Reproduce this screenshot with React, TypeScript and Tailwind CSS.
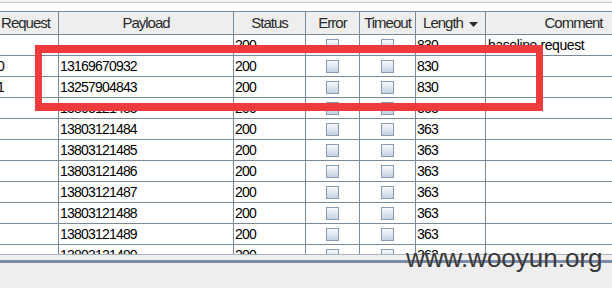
import React from "react";

type Row = { req: string; payload: string; status: string; length: string; comment: string };

const rows: Row[] = [
  { req: "", payload: "", status: "200", length: "830", comment: "baseline request" },
  { req: "0", payload: "13169670932", status: "200", length: "830", comment: "" },
  { req: "1", payload: "13257904843", status: "200", length: "830", comment: "" },
  { req: "", payload: "13803121483", status: "200", length: "363", comment: "" },
  { req: "", payload: "13803121484", status: "200", length: "363", comment: "" },
  { req: "", payload: "13803121485", status: "200", length: "363", comment: "" },
  { req: "", payload: "13803121486", status: "200", length: "363", comment: "" },
  { req: "", payload: "13803121487", status: "200", length: "363", comment: "" },
  { req: "", payload: "13803121488", status: "200", length: "363", comment: "" },
  { req: "", payload: "13803121489", status: "200", length: "363", comment: "" },
  { req: "", payload: "13803121490", status: "200", length: "363", comment: "" },
];

function Check() {
  return (
    <div className="w-[13px] h-[13px] border border-[#8b9bb0] bg-linear-to-b from-[#f7f9fc] to-[#c5d2e3]" />
  );
}

function HeaderCell({ w, children }: { w: string; children: React.ReactNode }) {
  return (
    <div className={`${w} shrink-0 h-full border-r border-[#7a8a99] flex items-center justify-center pt-[1px]`}>
      {children}
    </div>
  );
}

export default function App() {
  return (
    <div className="w-[612px] h-[288px] overflow-hidden relative bg-[#eeeeee] font-['Liberation_Sans',Arial,sans-serif]">
      <div className="h-[2px] bg-[#f5f5f5]" />
      <div className="h-px bg-[#c4c4c4]" />
      <div className="h-[8px] bg-white" />
      <div className="h-[244px] overflow-hidden bg-white border-b border-[#aab4c0]">
        <div className="-ml-[7px] w-[700px]">
          <div className="flex h-[24px] border-y border-[#7a8a99] bg-[#eeeeee] text-[15px] tracking-[-1px] text-[#2a2a2a]">
            <HeaderCell w="w-[66px]">Request</HeaderCell>
            <HeaderCell w="w-[175px]">Payload</HeaderCell>
            <HeaderCell w="w-[72px]">Status</HeaderCell>
            <HeaderCell w="w-[54px]">Error</HeaderCell>
            <HeaderCell w="w-[56px]">Timeout</HeaderCell>
            <HeaderCell w="w-[70px]">
              <span>Length</span>
              <svg width="9" height="5" viewBox="0 0 9 5" className="ml-[6px] mt-[1px]">
                <path d="M0 0 H9 L4.5 5 Z" fill="#2a2a2a" />
              </svg>
            </HeaderCell>
            <HeaderCell w="w-[176px]">Comment</HeaderCell>
          </div>
          {rows.map((r, i) => (
            <div key={i} className="flex h-[21px] border-b border-[#7a8a99] text-[14px] tracking-[-0.8px] leading-[20px] text-black">
              <div className="w-[66px] shrink-0 border-r border-[#7a8a99] pl-[4px]">{r.req}</div>
              <div className="w-[175px] shrink-0 border-r border-[#7a8a99] pl-[1px]">{r.payload}</div>
              <div className="w-[72px] shrink-0 border-r border-[#7a8a99] pl-[1px]">{r.status}</div>
              <div className="w-[54px] shrink-0 border-r border-[#7a8a99] flex items-center justify-center">
                <Check />
              </div>
              <div className="w-[56px] shrink-0 border-r border-[#7a8a99] flex items-center justify-center">
                <Check />
              </div>
              <div className="w-[70px] shrink-0 border-r border-[#7a8a99] pl-[1px]">{r.length}</div>
              <div className="w-[176px] shrink-0 border-r border-[#7a8a99] pl-[2px] tracking-[-0.4px]">{r.comment}</div>
            </div>
          ))}
        </div>
      </div>
      <div className="h-[5px] bg-[#f0f0f0]" />
      <div className="h-[3px] bg-[#7d8ca8]" />

      <div className="absolute left-[35px] top-[45px] w-[508px] h-[66px] border-x-[7px] border-y-[8px] border-[#ef3a3e]" />

      <div className="absolute left-[406px] top-[245px] text-[26px] leading-[26px] text-[#3a3a3a] whitespace-nowrap">
        www.wooyun.org
      </div>
    </div>
  );
}
